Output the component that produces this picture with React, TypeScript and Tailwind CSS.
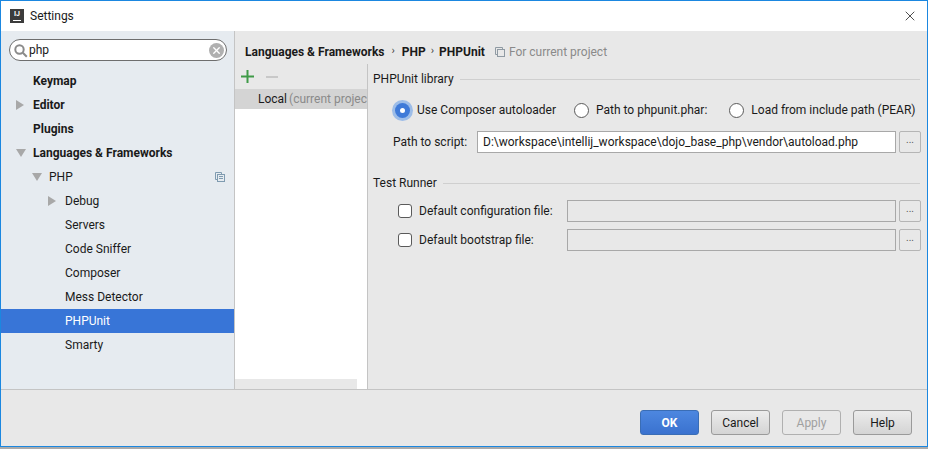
import { X } from "lucide-react";

const font = { fontFamily: 'Roboto, "Open Sans", sans-serif' };

function TreeRow({ label, indent, arrow, bold, selected, copy }: { label: string; indent: string; arrow?: "right" | "down"; bold?: boolean; selected?: boolean; copy?: boolean }) {
  return (
    <div className={`h-6 flex items-center relative text-[12px] ${indent} ${selected ? "bg-[#3875d7] text-white" : "text-[#1a1a1a]"} ${bold ? "font-bold" : ""}`}>
      {arrow === "right" && <span className="absolute -ml-[17px] w-0 h-0 border-y-[5px] border-y-transparent border-l-[8px] border-l-[#a8a8a8]" />}
      {arrow === "down" && <span className="absolute -ml-[17px] w-0 h-0 border-x-[5px] border-x-transparent border-t-[8px] border-t-[#a8a8a8]" />}
      <span>{label}</span>
      {copy && (
        <svg className="absolute left-[214px] top-[7px]" width="10" height="10" viewBox="0 0 10 10" fill="none" stroke="#7f9bb0">
          <path d="M2.5 7.5h-2v-7h6v2" />
          <rect x="2.5" y="2.5" width="7" height="7" fill="#e6ebf0" />
          <path d="M4 4.5h4M4 6.5h4" />
        </svg>
      )}
    </div>
  );
}

function Browse() {
  return (
    <div className="w-[22px] h-[22px] ml-[3px] border border-[#b5b5b5] rounded-[2px] bg-[#e8e8e8] flex items-center justify-center text-[10px] text-[#555] leading-none pb-1">...</div>
  );
}

function Radio({ label, checked, gap }: { label: string; checked?: boolean; gap: string }) {
  return (
    <div className={`flex items-center shrink-0 ${gap}`}>
      {checked ? (
        <span className="w-[15px] h-[15px] rounded-full bg-[#3f7ad8] ring-[3px] ring-[#9dbde8] flex items-center justify-center">
          <span className="w-[5px] h-[5px] rounded-full bg-white" />
        </span>
      ) : (
        <span className="w-[15px] h-[15px] rounded-full bg-white border border-[#5a5a5a]" />
      )}
      <span className="ml-[7px] text-[12px] text-[#1a1a1a] whitespace-nowrap">{label}</span>
    </div>
  );
}

function FileRow({ label, mt }: { label: string; mt: string }) {
  return (
    <div className={`flex items-center h-[22px] ${mt}`}>
      <span className="ml-[30px] w-[14px] h-[14px] rounded-[3px] bg-white border border-[#5a5a5a]" />
      <span className="ml-[7px] w-[148px] text-[12px] text-[#1a1a1a]">{label}</span>
      <div className="w-[329px] h-[22px] border border-[#a8a8a8] bg-[#e8e8e8]" />
      <Browse />
    </div>
  );
}

function Button({ label, primary, disabled, ml }: { label: string; primary?: boolean; disabled?: boolean; ml?: string }) {
  const look = primary
    ? "bg-gradient-to-b from-[#4d87e0] to-[#3a72cf] border-[#3a6db5] text-white font-bold"
    : disabled
      ? "bg-[#e8e8e8] border-[#b0b0b0] text-[#a0a0a0]"
      : "bg-gradient-to-b from-[#ececec] to-[#d4d4d4] border-[#9a9a9a] text-[#1a1a1a]";
  return <div className={`w-[59px] h-[25px] rounded-[3px] border flex items-center justify-center text-[12px] ${look} ${ml ?? ""}`}>{label}</div>;
}

export default function App() {
  return (
    <div className="w-[928px] h-[449px] flex flex-col bg-[#ababab] overflow-hidden" style={font}>
      <div className="h-[447px] flex flex-col border border-[#1b87e0] bg-[#e8e8e8]">
        {/* Title bar */}
        <div className="h-[30px] bg-white flex items-center shrink-0 relative">
          <div className="ml-[9px] w-[14px] h-[14px] bg-[#3c3c3c] text-white text-[7px] font-bold leading-none flex flex-col items-center pt-[2px]">
            <span>IJ</span>
            <span className="w-[8px] h-px bg-white mt-[2px]" />
          </div>
          <span className="ml-[6px] text-[12px] text-[#1a1a1a]">Settings</span>
          <X className="ml-auto mr-[9px]" size={16} strokeWidth={1.2} color="#222" />
        </div>

        <div className="flex h-[359px] shrink-0 border-b border-[#c4c4c4]">
          {/* Sidebar */}
          <div className="w-[233px] bg-[#e6ebf0] border-r border-[#c4c4c4] shrink-0 box-content">
            <div className="mt-[8px] ml-[8px] w-[218px] h-[22px] bg-white border border-[#6e6e6e] rounded-[11px] flex items-center relative">
              <svg className="ml-[3px]" width="15" height="15" viewBox="0 0 15 15" fill="none" stroke="#8a8a8a" strokeWidth="2">
                <circle cx="6.5" cy="6.5" r="4.2" />
                <path d="M9.8 9.8l4 4" />
              </svg>
              <span className="ml-px text-[12px] text-[#1a1a1a]">php</span>
              <span className="ml-auto mr-[2px] w-[15px] h-[15px] rounded-full bg-[#b0b0b0] flex items-center justify-center">
                <X size={11} strokeWidth={3} color="#fff" />
              </span>
            </div>
            <div className="mt-[8px]">
              <TreeRow label="Keymap" indent="pl-[32px]" bold />
              <TreeRow label="Editor" indent="pl-[32px]" arrow="right" bold />
              <TreeRow label="Plugins" indent="pl-[32px]" bold />
              <TreeRow label="Languages & Frameworks" indent="pl-[32px]" arrow="down" bold />
              <TreeRow label="PHP" indent="pl-[48px]" arrow="down" copy />
              <TreeRow label="Debug" indent="pl-[64px]" arrow="right" />
              <TreeRow label="Servers" indent="pl-[64px]" />
              <TreeRow label="Code Sniffer" indent="pl-[64px]" />
              <TreeRow label="Composer" indent="pl-[64px]" />
              <TreeRow label="Mess Detector" indent="pl-[64px]" />
              <TreeRow label="PHPUnit" indent="pl-[64px]" selected />
              <TreeRow label="Smarty" indent="pl-[64px]" />
            </div>
          </div>

          {/* Main */}
          <div className="flex-1 flex flex-col min-w-0">
            <div className="h-[33px] flex items-center pl-[10px] pt-[8px] shrink-0 text-[12px]">
              <span className="font-bold text-[#1a1a1a]">Languages &amp; Frameworks</span>
              <span className="mx-[7px] text-[#444] text-[11px]">›</span>
              <span className="font-bold text-[#1a1a1a]">PHP</span>
              <span className="mx-[5px] text-[#444] text-[11px]">›</span>
              <span className="font-bold text-[#1a1a1a]">PHPUnit</span>
              <svg className="ml-[10px]" width="10" height="10" viewBox="0 0 10 10" fill="none" stroke="#8f9aa3">
                <path d="M2.5 7.5h-2v-7h7v2" />
                <rect x="2.5" y="2.5" width="7" height="7" />
              </svg>
              <span className="ml-[4px] text-[#8a8a8a]">For current project</span>
            </div>
            <div className="flex-1 flex min-h-0">
              {/* Interpreter list */}
              <div className="w-[132px] shrink-0 flex flex-col">
                <div className="h-[25px] flex items-center pl-[6px] shrink-0">
                  <svg width="13" height="13" viewBox="0 0 13 13"><path d="M5.5 0h2v5.5H13v2H7.5V13h-2V7.5H0v-2h5.5z" fill="#3f9a47" /></svg>
                  <span className="ml-[12px] w-[12px] h-[2px] bg-[#c8c8c8]" />
                </div>
                <div className="h-[20px] bg-[#d4d4d4] pl-[23px] flex items-center text-[12px] whitespace-nowrap overflow-hidden shrink-0">
                  <span className="text-[#1a1a1a]">Local</span>
                  <span className="ml-[2px] text-[#8a8a8a]">(current projec</span>
                </div>
                <div className="flex-1 bg-white flex flex-col justify-end">
                  <div className="h-[10px] w-[122px] bg-[#e8e8e8]" />
                </div>
              </div>

              {/* Form */}
              <div className="flex-1 border-l border-[#c4c4c4] min-w-0">
                <div className="flex items-center h-[18px] mt-[6px] ml-[5px] mr-[7px] text-[12px] text-[#1a1a1a]">
                  <span>PHPUnit library</span>
                  <span className="flex-1 h-px ml-[6px] bg-[#cfcfcf]" />
                </div>
                <div className="flex items-center h-[24px] mt-[10px] ml-[27px]">
                  <Radio label="Use Composer autoloader" checked gap="" />
                  <Radio label="Path to phpunit.phar:" gap="ml-[18px]" />
                  <Radio label="Load from include path (PEAR)" gap="ml-[22px]" />
                </div>
                <div className="flex items-center h-[22px] mt-[9px] ml-[25px]">
                  <span className="w-[84px] text-[12px] text-[#1a1a1a]">Path to script:</span>
                  <div className="w-[419px] h-[22px] border border-[#a8a8a8] bg-white pl-[5px] flex items-center text-[12px] text-[#1a1a1a] whitespace-nowrap overflow-hidden">
                    D:\workspace\intellij_workspace\dojo_base_php\vendor\autoload.php
                  </div>
                  <Browse />
                </div>
                <div className="flex items-center h-[18px] mt-[21px] ml-[5px] mr-[7px] text-[12px] text-[#1a1a1a]">
                  <span>Test Runner</span>
                  <span className="flex-1 h-px ml-[6px] bg-[#cfcfcf]" />
                </div>
                <FileRow label="Default configuration file:" mt="mt-[8px]" />
                <FileRow label="Default bootstrap file:" mt="mt-[7px]" />
              </div>
            </div>
          </div>
        </div>

        {/* Footer */}
        <div className="flex-1 flex items-start pt-[20px] pl-[639px]">
          <Button label="OK" primary />
          <Button label="Cancel" ml="ml-[12px]" />
          <Button label="Apply" disabled ml="ml-[12px]" />
          <Button label="Help" ml="ml-[12px]" />
        </div>
      </div>
    </div>
  );
}
